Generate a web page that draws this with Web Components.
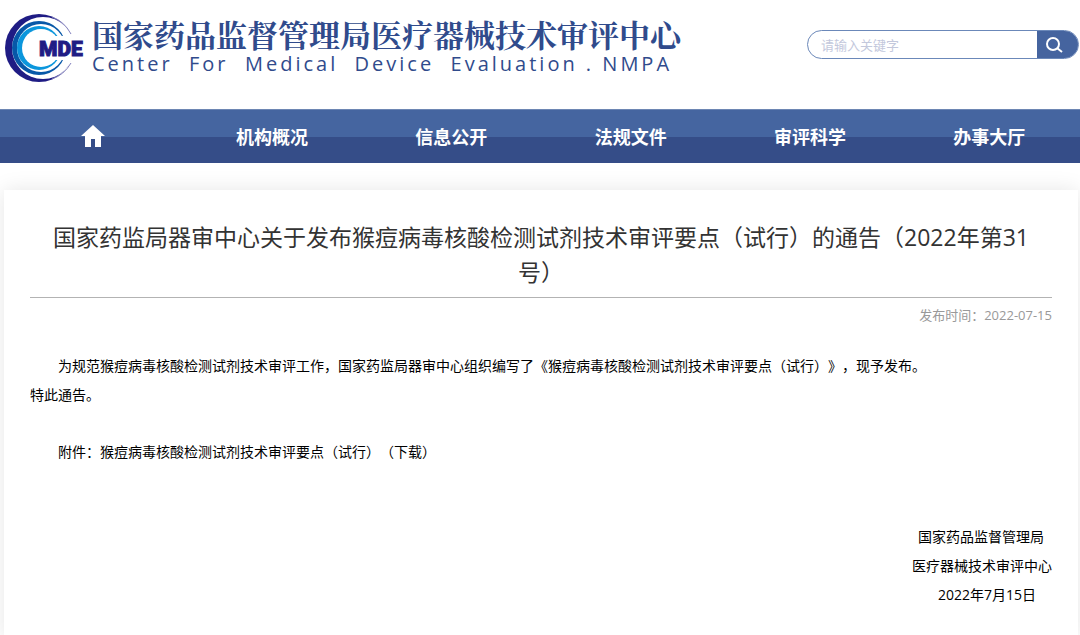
<!DOCTYPE html>
<html lang="zh-CN">
<head>
<meta charset="utf-8">
<meta name="viewport" content="width=device-width, initial-scale=1">
<title>国家药品监督管理局医疗器械技术审评中心</title>
<style>
  body {
    margin: 0;
    background: #fff;
    color: #000;
    font-family: "Open Sans", "Noto Sans CJK SC", sans-serif;
    font-size: 14px;
    text-spacing-trim: space-all;
  }
</style>
</head>
<body>
<site-header>
  <site-logo></site-logo>
  <site-search slot="tools" placeholder="请输入关键字"></site-search>
</site-header>

<site-nav>
  <nav-item home label="首页"></nav-item>
  <nav-item>机构概况</nav-item>
  <nav-item>信息公开</nav-item>
  <nav-item>法规文件</nav-item>
  <nav-item>审评科学</nav-item>
  <nav-item>办事大厅</nav-item>
</site-nav>

<notice-article date="2022-07-15">
  <span slot="title">国家药监局器审中心关于发布猴痘病毒核酸检测试剂技术审评要点（试行）的通告（2022年第31号）</span>
  <notice-text indent>为规范猴痘病毒核酸检测试剂技术审评工作，国家药监局器审中心组织编写了《猴痘病毒核酸检测试剂技术审评要点（试行）》，现予发布。</notice-text>
  <notice-text>特此通告。</notice-text>
  <notice-attachment href="#download">猴痘病毒核酸检测试剂技术审评要点（试行）</notice-attachment>
  <notice-signature>
    <span slot="office">国家药品监督管理局</span>
    <span slot="center">医疗器械技术审评中心</span>
    <span slot="date">2022年7月15日</span>
  </notice-signature>
</notice-article>

<script>
class BaseElement extends HTMLElement {
  connectedCallback() {
    if (this.shadowRoot) return;
    this.attachShadow({ mode: "open" });
    this.shadowRoot.innerHTML = this.template();
  }
}

class SiteHeader extends BaseElement {
  template() {
    return `
    <style>
      :host { display: block; }
      header {
        display: flex;
        align-items: flex-start;
        justify-content: space-between;
        padding: 12px 1px 24px 4px;
      }
      .tools { padding-top: 18px; }
    </style>
    <header>
      <slot></slot>
      <div class="tools"><slot name="tools"></slot></div>
    </header>`;
  }
}

class SiteLogo extends BaseElement {
  template() {
    return `
    <style>
      :host { display: block; color: #304b8c; }
      a {
        display: flex;
        gap: 6px;
        color: inherit;
        text-decoration: none;
      }
      svg { flex: none; display: block; }
      .names { display: flex; flex-direction: column; padding-top: 2px; }
      .cn {
        font: bold 31px/40px "Noto Serif CJK SC", "Noto Sans CJK SC", serif;
        white-space: nowrap;
      }
      .en {
        font-size: 20px;
        line-height: 20px;
        letter-spacing: 3px;
        white-space: pre;
      }
    </style>
    <a href="#">
      <svg width="82" height="73" viewBox="4 12 82 73" role="img" aria-label="CMDE">
        <defs>
          <linearGradient id="fade" x1="0" x2="1">
            <stop offset="0.7" stop-color="#1f1c84"/>
            <stop offset="1" stop-color="#8f8dc4"/>
          </linearGradient>
        </defs>
        <circle cx="39" cy="48" r="34" fill="url(#fade)"/>
        <circle cx="43" cy="48" r="31" fill="#fff"/>
        <circle cx="39" cy="48" r="27" fill="#0758a8"/>
        <circle cx="41" cy="48" r="24" fill="#fff"/>
        <circle cx="39" cy="48" r="22" fill="#0b96dc"/>
        <circle cx="41" cy="48" r="19" fill="#fff"/>
        <path d="M50 36H86V60H50Z" fill="#fff"/>
        <path d="M52 17Q64 21 71 34M52 79Q64 75 71 63" fill="none" stroke="#8280bd"/>
        <text x="39" y="56" fill="#1f1c84" stroke="#1f1c84" font-family="Roboto, Liberation Sans, sans-serif" font-weight="900" font-size="21">MDE</text>
      </svg>
      <span class="names">
        <span class="cn">国家药品监督管理局医疗器械技术审评中心</span>
        <span class="en">Center  For  Medical  Device  Evaluation . NMPA</span>
      </span>
    </a>`;
  }
}

class SiteSearch extends BaseElement {
  template() {
    return `
    <style>
      :host { display: block; }
      form {
        display: flex;
        box-sizing: border-box;
        width: 272px;
        height: 29px;
        border: 1px solid #6b88b9;
        border-radius: 15px;
        overflow: hidden;
        background: #fff;
      }
      input {
        flex: 1;
        min-width: 0;
        padding: 0 13px;
        border: 0;
        outline: 0;
        background: none;
        font: inherit;
        font-size: 13px;
      }
      input::placeholder { color: #c3c8dc; }
      button {
        display: flex;
        align-items: center;
        width: 41px;
        padding: 0 8px;
        border: 0;
        background: #45649f;
        cursor: pointer;
      }
    </style>
    <form role="search">
      <input type="text" aria-label="${this.getAttribute("placeholder")}" placeholder="${this.getAttribute("placeholder")}">
      <button type="button" aria-label="搜索">
        <svg width="18" height="18" viewBox="0 0 18 18" fill="none" stroke="#fff" stroke-width="2">
          <circle cx="8" cy="8" r="6"/>
          <path d="M12 12l5 4"/>
        </svg>
      </button>
    </form>`;
  }
}

class SiteNav extends BaseElement {
  template() {
    return `
    <style>
      :host { display: block; }
      nav {
        display: flex;
        padding: 0 1px 0 3px;
        border-top: 1px solid #6d86b3;
        background: linear-gradient(#4565a0 27px, #354d88 27px);
      }
      ::slotted(*) { flex: 1; }
    </style>
    <nav><slot></slot></nav>`;
  }
}

class NavItem extends BaseElement {
  template() {
    const home = `
      <svg width="24" height="22" viewBox="0 0 24 22" fill="#fff">
        <path d="M12 0L24 11H20V22H14V14H10V22H4V11H0Z"/>
      </svg>`;
    const label = this.getAttribute("label");
    return `
    <style>
      :host { display: block; }
      a {
        display: flex;
        align-items: center;
        justify-content: center;
        height: 51px;
        padding-bottom: 2px;
        color: #fff;
        font-size: 18px;
        font-weight: bold;
        text-decoration: none;
      }
    </style>
    <a href="#"${label ? ` aria-label="${label}"` : ""}>${this.hasAttribute("home") ? home : "<slot></slot>"}</a>`;
  }
}

class NoticeArticle extends BaseElement {
  template() {
    return `
    <style>
      :host { display: block; padding: 27px 2px 0 4px; overflow: hidden; }
      article {
        padding: 30px 26px;
        background: #fff;
        box-shadow: 0 0 20px rgba(0, 0, 0, .1);
      }
      h1 {
        margin: 0;
        padding: 0 12px 7px;
        color: #333;
        font-size: 23px;
        font-weight: normal;
        line-height: 35px;
        text-align: center;
      }
      .date {
        padding-top: 7px;
        border-top: 1px solid #b3b3b3;
        color: #999;
        font-size: 13px;
        line-height: 20px;
        text-align: right;
      }
      .content { padding-top: 26px; line-height: 29px; }
    </style>
    <article>
      <h1><slot name="title"></slot></h1>
      <div class="date">发布时间：${this.getAttribute("date")}</div>
      <div class="content"><slot></slot></div>
    </article>`;
  }
}

class NoticeText extends BaseElement {
  template() {
    return `
    <style>
      :host { display: block; }
      :host([indent]) { text-indent: 2em; }
      p { margin: 0; }
    </style>
    <p><slot></slot></p>`;
  }
}

class NoticeAttachment extends BaseElement {
  template() {
    return `
    <style>
      :host { display: block; padding-top: 28px; text-indent: 2em; }
      p { margin: 0; }
      a { color: inherit; text-decoration: none; }
    </style>
    <p>附件：<slot></slot><a href="${this.getAttribute("href")}">（下载）</a></p>`;
  }
}

class NoticeSignature extends BaseElement {
  template() {
    return `
    <style>
      :host { display: block; padding-top: 56px; text-align: right; }
      p { margin: 0; }
      .office { padding-right: 8px; }
      .date { padding-right: 16px; }
    </style>
    <p class="office"><slot name="office"></slot></p>
    <p><slot name="center"></slot></p>
    <p class="date"><slot name="date"></slot></p>`;
  }
}

customElements.define("site-header", SiteHeader);
customElements.define("site-logo", SiteLogo);
customElements.define("site-search", SiteSearch);
customElements.define("site-nav", SiteNav);
customElements.define("nav-item", NavItem);
customElements.define("notice-article", NoticeArticle);
customElements.define("notice-text", NoticeText);
customElements.define("notice-attachment", NoticeAttachment);
customElements.define("notice-signature", NoticeSignature);
</script>
</body>
</html>
